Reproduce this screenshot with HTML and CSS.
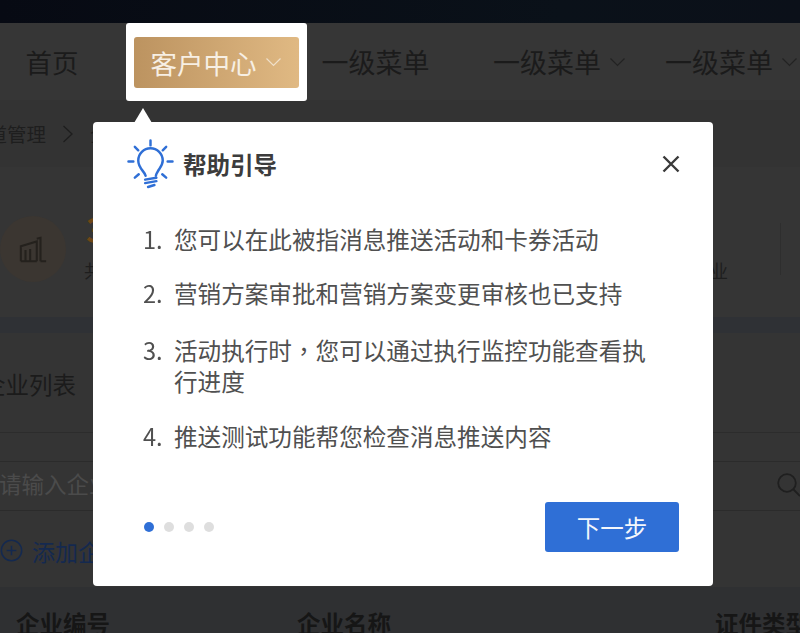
FILE: index.html
```html
<!DOCTYPE html>
<html lang="zh">
<head>
<meta charset="utf-8">
<title>帮助引导</title>
<link rel="stylesheet" href="styles.css">
</head>
<body>
<div class="page">
  <div class="topbar"></div>
  <nav class="nav">
    <span class="nav-item home">首页</span>
    <div class="nav-spot">
      <div class="nav-gold">客户中心
        <svg class="chev" viewBox="0 0 16 10"><path d="M1 1.500 8 8.500 15 1.500"/></svg>
      </div>
    </div>
    <span class="nav-item first">一级菜单</span>
    <span class="nav-item second">一级菜单<svg class="chev" viewBox="0 0 16 10"><path d="M1 1.500 8 8.500 15 1.500"/></svg></span>
    <span class="nav-item third">一级菜单<svg class="chev" viewBox="0 0 16 10"><path d="M1 1.500 8 8.500 15 1.500"/></svg></span>
  </nav>
  <div class="crumbs">
    <span class="crumb-text">渠道管理</span>
    <svg class="crumb-sep" viewBox="0 0 12 20"><path d="M1.500 2 10 10 1.500 18"/></svg>
    <span class="crumb-text">企业管理</span>
  </div>
  <section class="stats">
    <div class="stat-icon">
      <svg viewBox="0 0 32 32"><path d="M3 29V13L20 8V29M3 29H20M8 17V29M13 16V29M24 29V4L20 5M24 29H30"/></svg>
    </div>
    <div class="stat-body">
      <div class="stat-num">3</div>
      <div class="stat-label">共有企业</div>
    </div>
    <div class="stat-right">
      <span class="stat-label">企业</span>
      <span class="stat-rule"></span>
    </div>
  </section>
  <section class="list">
    <h2 class="list-title">企业列表</h2>
    <div class="search">
      <span class="placeholder">请输入企业名称</span>
      <svg class="search-icon" viewBox="0 0 26 26"><circle cx="11" cy="11" r="8.800"/><path d="M17.500 17.500 24 24"/></svg>
    </div>
    <div class="add">
      <svg viewBox="0 0 24 24"><circle cx="12" cy="12" r="10.600"/><path d="M12 7V17M7 12H17"/></svg>
      <span>添加企业</span>
    </div>
    <div class="thead">
      <span class="th th-a">企业编号</span>
      <span class="th th-b">企业名称</span>
      <span class="th th-c">证件类型</span>
    </div>
  </section>
</div>

<div class="guide">
  <span class="guide-arrow"></span>
  <header class="guide-head">
    <svg class="bulb" viewBox="0 0 48 50">
      <path d="M24 1.500V6.500M8 8 11.500 11.500M40 8 36.500 11.500M1.500 23H6.500M41.500 23H46.500M8 39.500 12 36M40 39.500 36 36"/>
      <path d="M19 37.500C18 33 11.500 30 11.500 22A12.500 12.500 0 1 1 36.500 22C36.500 27 33 30 31.500 33S30 35 29.500 37.500"/>
      <path d="M18.500 41.500 30 39.500M18.500 45 30 43M21.500 49 28 47"/>
    </svg>
    <h1 class="guide-title">帮助引导</h1>
    <svg class="close" viewBox="0 0 18 18"><path d="M1.500 1.500 16.500 16.500M16.500 1.500 1.500 16.500"/></svg>
  </header>
  <ol class="guide-list">
    <li>您可以在此被指消息推送活动和卡券活动</li>
    <li>营销方案审批和营销方案变更审核也已支持</li>
    <li class="tall">活动执行时<span class="comma" lang="zh-Hant">，</span>您可以通过执行监控功能查看执行进度</li>
    <li>推送测试功能帮您检查消息推送内容</li>
  </ol>
  <footer class="guide-foot">
    <div class="dots">
      <span class="dot on"></span><span class="dot"></span><span class="dot"></span><span class="dot"></span>
    </div>
    <button class="next">下一步</button>
  </footer>
</div>
</body>
</html>
```

FILE: styles.css
```css
* { box-sizing: border-box; }
html, body { margin: 0; height: 100%; overflow: hidden; }
body {
  width: 800px;
  height: 633px;
  position: relative;
  background: #2f3135;
  font-family: "Noto Sans CJK SC", "Noto Sans", sans-serif;
  filter: blur(0.6px);
}
.page { width: 800px; height: 633px; overflow: hidden; }
.topbar { height: 23px; background: linear-gradient(90deg, #070a13, #0a1119 70%, #0b1019); }
.nav {
  height: 77px;
  background: #363636;
  display: flex;
  align-items: center;
  color: #1b1b1b;
  font-size: 27px;
}
.nav-item { display: flex; align-items: center; white-space: nowrap; }
.home { margin-left: 25.500px; width: 100px; font-size: 26.500px; }
.nav-spot {
  width: 181.500px;
  height: 77.500px;
  background: #fff;
  border-radius: 3px;
  padding: 14px 8px 13px;
  align-self: flex-start;
}
.nav-gold {
  height: 50.500px;
  border-radius: 3px;
  background: linear-gradient(90deg, #bc9360, #e0b983);
  color: #f7efe4;
  font-size: 26.500px;
  display: flex;
  align-items: center;
  padding-left: 17px;
  white-space: nowrap;
}
.chev { width: 17px; height: 10px; margin-left: 8px; fill: none; stroke: currentColor; stroke-width: 1.200px; opacity: .75; }
.first { margin-left: 14.500px; }
.second { margin-left: 63.500px; }
.third { margin-left: 39px; }
.nav-item .chev { stroke: #1d1d1d; }
.crumbs {
  height: 67px;
  background: #333333;
  display: flex;
  align-items: center;
  gap: 16px;
  color: #1e1e1e;
  font-size: 19.500px;
  margin-left: -32px;
}
.crumb-sep { width: 12px; height: 20px; fill: none; stroke: #1e1e1e; stroke-width: 1.300px; }
.stats {
  height: 150px;
  background: #353535;
  display: flex;
  align-items: flex-start;
  padding-top: 49px;
}
.stat-icon {
  width: 66px;
  height: 66px;
  border-radius: 50%;
  background: #3b3631;
  display: flex;
  align-items: center;
  justify-content: center;
  flex: none;
}
.stat-icon svg { width: 30px; height: 30px; fill: none; stroke: #24211d; stroke-width: 2.200px; }
.stat-body { margin-left: 20px; width: 606px; flex: none; margin-top: -4px; }
.stat-num { color: #6f4716; font-size: 33px; line-height: 34px; font-weight: 700; }
.stat-body .stat-label { margin: 12px 0 0 -2px; }
.stat-label { color: #1e1e1e; font-size: 18px; line-height: 24px; white-space: nowrap; }
.stat-right { display: flex; align-items: flex-start; }
.stat-right .stat-label { margin-top: 42px; }
.stat-rule { width: 1px; height: 52px; background: #2e2e2e; margin: 7px 0 0 52px; }
.list { height: 300px; margin-top: 16px; background: #343434; position: relative; }
.list-title {
  margin: 0 0 0 -18px;
  height: 99px;
  padding-top: 33px;
  font-size: 23.500px;
  font-weight: 400;
  line-height: 36px;
  color: #1b1b1b;
}
.search {
  height: 78px;
  border-top: 1px solid #2c2c2c;
  display: flex;
  align-items: flex-end;
  justify-content: space-between;
  position: relative;
}
.search::after {
  content: "";
  position: absolute;
  left: 0;
  right: 0;
  top: 28px;
  height: 48px;
  border-top: 1px solid #2b2b2b;
  border-bottom: 1px solid #2b2b2b;
  pointer-events: none;
}
.placeholder { margin: 0 0 2px -1px; color: #4b4b4b; font-size: 22.500px; line-height: 50px; white-space: nowrap; }
.search-icon { width: 26px; height: 26px; margin: 0 -2px 12px 0; fill: none; stroke: #1f1f1f; stroke-width: 1.800px; }
.add {
  height: 77px;
  display: flex;
  align-items: center;
  gap: 9px;
  color: #14294f;
  font-size: 23px;
  padding-top: 4px;
}
.add svg { width: 23px; height: 23px; flex: none; fill: none; stroke: #14294f; stroke-width: 1.600px; }
.thead { height: 46px; background: #2f3032; display: flex; padding-top: 21px; }
.th { flex: none; font-size: 23.500px; font-weight: 700; color: #161616; line-height: 30px; white-space: nowrap; }
.th-a { margin-left: 16px; width: 281px; }
.th-b { width: 418px; }

.guide {
  position: absolute;
  left: 93px;
  top: 122px;
  width: 620px;
  height: 464px;
  background: #fff;
  border-radius: 4px;
  color: #444;
}
.guide-arrow {
  position: absolute;
  left: 41px;
  top: -14px;
  width: 18px;
  height: 15px;
  background: #fff;
  clip-path: polygon(50% 0, 100% 100%, 0 100%);
}
.guide-head { display: flex; align-items: center; height: 82px; padding: 0 33px 3px 34px; }
.bulb { width: 47px; height: 49px; flex: none; fill: none; stroke: #2f6fd6; stroke-width: 2.500px; stroke-linecap: round; overflow: visible; margin-top: 3px; }
.guide-title { margin: 5px 0 0 9px; font-size: 23.500px; line-height: 32px; font-weight: 700; color: #3c3c3c; }
.close { width: 18px; height: 18px; margin: 4px 0 0 auto; fill: none; stroke: #3a3a3a; stroke-width: 2.400px; }
.guide-list {
  margin: 0;
  padding: 19px 0 0 81px;
  width: 560px;
  font-size: 23.600px;
  line-height: 32px;
  color: #505050;
  list-style: none;
  counter-reset: step;
  height: 280px;
}
.guide-list li { counter-increment: step; position: relative; margin-bottom: 22px; }
.guide-list li.tall { margin-top: 26px; margin-bottom: 23px; line-height: 31px; }
.guide-list li::before {
  content: counter(step) ".";
  position: absolute;
  left: -31px;
  top: 0;
}
.comma { font-family: "Noto Sans CJK TC", sans-serif; }
.guide-foot { display: flex; align-items: center; justify-content: space-between; padding: 0 34px 0 51px; height: 50px; margin-top: 18px; }
.dots { display: flex; gap: 10px; }
.dot { width: 10px; height: 10px; border-radius: 50%; background: #dedede; }
.dot.on { background: #2f6fd6; }
.next {
  width: 134px;
  height: 50px;
  border: 0;
  border-radius: 3px;
  background: #2f6fd6;
  color: #f4f7fc;
  font: inherit;
  font-size: 23.500px;
}
```
